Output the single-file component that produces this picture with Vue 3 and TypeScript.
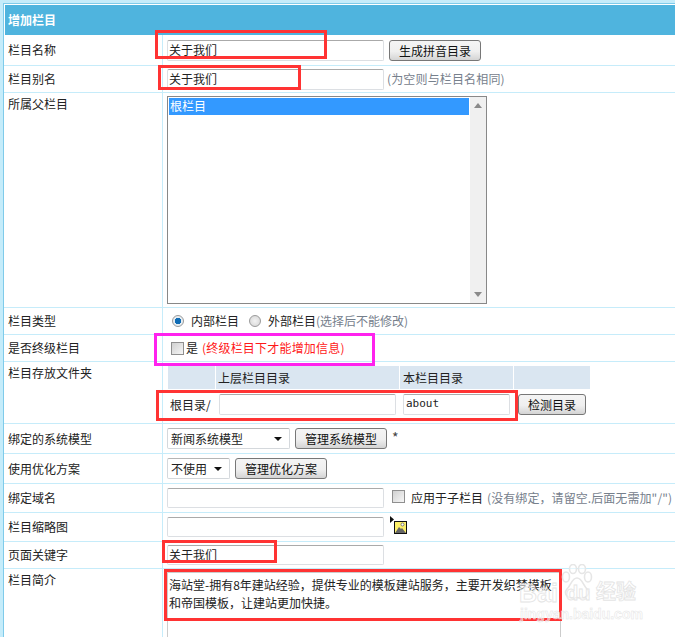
<script setup lang="ts">
const mainName = '关于我们'
</script>

<template>
  <div class="page">
    <div class="head">增加栏目</div>

    <div class="row" style="height:31px">
      <div class="lab">栏目名称</div>
      <div class="val">
        <span class="inp w217">{{ mainName }}</span>
        <span class="btn w92">生成拼音目录</span>
      </div>
    </div>
    <div class="row" style="height:27px">
      <div class="lab">栏目别名</div>
      <div class="val">
        <span class="inp w217">{{ mainName }}</span>
        <span class="gray note">(为空则与栏目名相同)</span>
      </div>
    </div>
    <div class="row" style="height:215px">
      <div class="lab top">所属父栏目</div>
      <div class="val top-val">
        <div class="list">
          <div class="list-body"><div class="opt">根栏目</div></div>
          <div class="scroll">
            <svg class="arr" width="8" height="5" viewBox="0 0 8 5"><path d="M0 5 L4 0 L8 5Z" fill="#8a8a8a" /></svg>
            <svg class="arr" width="8" height="5" viewBox="0 0 8 5"><path d="M0 0 L4 5 L8 0Z" fill="#8a8a8a" /></svg>
          </div>
        </div>
      </div>
    </div>
    <div class="row" style="height:27px">
      <div class="lab">栏目类型</div>
      <div class="val radios">
        <span class="radio on"></span><span class="rtext">内部栏目</span>
        <span class="radio"></span><span class="rtext2">外部栏目<span class="gray">(选择后不能修改)</span></span>
      </div>
    </div>
    <div class="row" style="height:27px">
      <div class="lab">是否终级栏目</div>
      <div class="val checks">
        <span class="check"></span><span class="is">是</span><span class="red">(终级栏目下才能增加信息)</span>
      </div>
    </div>
    <div class="row" style="height:62px">
      <div class="lab top">栏目存放文件夹</div>
      <div class="dirs">
        <div class="dir-head">
          <div class="c1"></div>
          <div class="c2">上层栏目目录</div>
          <div class="c3">本栏目目录</div>
          <div class="c4"></div>
        </div>
        <div class="dir-body">
          <span class="root">根目录/</span>
          <span class="inp w177"></span>
          <span class="inp w107 latin">about</span>
          <span class="btn w68">检测目录</span>
        </div>
      </div>
    </div>
    <div class="row" style="height:30px">
      <div class="lab">绑定的系统模型</div>
      <div class="val">
        <span class="sel w123">新闻系统模型<i class="caret"></i></span>
        <span class="btn w92 ml5">管理系统模型</span>
        <span class="star">*</span>
      </div>
    </div>
    <div class="row" style="height:30px">
      <div class="lab">使用优化方案</div>
      <div class="val">
        <span class="sel w63">不使用<i class="caret"></i></span>
        <span class="btn w92 ml5">管理优化方案</span>
      </div>
    </div>
    <div class="row" style="height:29px">
      <div class="lab">绑定域名</div>
      <div class="val">
        <span class="inp w217 h20"></span>
        <span class="check small"></span>
        <span class="apply">应用于子栏目</span>
        <span class="gray tip">(没有绑定，请留空.后面无需加"/")</span>
      </div>
    </div>
    <div class="row" style="height:29px">
      <div class="lab">栏目缩略图</div>
      <div class="val">
        <span class="inp w217 h20"></span>
        <svg class="pic" width="17" height="18" viewBox="0 0 17 18">
          <path d="M0 0 L4 3.500 L0 7Z" fill="#111" />
          <rect x="4.500" y="5.500" width="12" height="12" fill="#fdf06a" stroke="#111" />
          <circle cx="12.500" cy="8.500" r="1.500" fill="#fff" stroke="#555" stroke-width=".7" />
          <path d="M5 17 L9 11 L11 13 L12 12 L16 17Z" fill="#666" />
        </svg>
      </div>
    </div>
    <div class="row" style="height:27px">
      <div class="lab">页面关键字</div>
      <div class="val">
        <span class="inp w217 h20">{{ mainName }}</span>
      </div>
    </div>
    <div class="row last">
      <div class="lab top">栏目简介</div>
      <div class="val top-val2">
        <div class="area">海站堂-拥有8年建站经验，提供专业的模板建站服务，主要开发织梦模板<br />和帝国模板，让建站更加快捷。</div>
      </div>
    </div>

    <i class="mark red-mark m1"></i>
    <i class="mark red-mark m2"></i>
    <i class="mark pink-mark m3"></i>
    <i class="mark red-mark m4"></i>
    <i class="mark red-mark m5"></i>
    <i class="mark red-mark m6"></i>

    <div class="wm">
      <svg class="paw" width="32" height="38" viewBox="0 0 32 38">
        <g fill="rgba(255,255,255,.5)" stroke="#e6e6e6" stroke-width="1.600">
          <ellipse cx="5" cy="13" rx="3.500" ry="5" />
          <ellipse cx="12" cy="5" rx="3.500" ry="4.500" />
          <ellipse cx="21" cy="5" rx="3.500" ry="4.500" />
          <ellipse cx="27" cy="13" rx="3.500" ry="5" />
          <path d="M16 14 C11 14 10 21 6 25 C2 30 7 35 13 34 C15 33.500 17 33.500 19 34 C25 35 30 30 26 25 C22 21 21 14 16 14Z" />
        </g>
      </svg>
      <span class="bai">Bai</span><span class="du">du</span><span class="jy">经验</span>
      <span class="url">jingyan.baidu.com</span>
    </div>
  </div>
</template>

<style>
html, body { margin: 0; padding: 0; background: #fff; overflow: hidden; }
</style>

<style scoped>
.page {
  position: relative;
  width: 675px;
  height: 637px;
  overflow: hidden;
  box-sizing: border-box;
  background: #fff;
  border-left: 3px solid #c5ecfa;
  box-shadow: inset 1px 0 0 #7fcbea;
  padding-top: 5px;
  font: 12px/16px "Noto Sans CJK SC", "Liberation Sans", sans-serif;
  color: #222;
}
.page::before {
  content: "";
  position: absolute;
  left: 0; right: 0; top: 0;
  height: 3px;
  background: #c5ecfa;
  border-bottom: 1px solid #7fcbea;
}
.head {
  height: 30px;
  line-height: 30px;
  margin-left: 2px;
  padding-left: 3px;
  background: #4fb4de;
  color: #fff;
  font-weight: 700;
}
.row {
  display: flex;
  box-sizing: border-box;
  margin-left: 1px;
  border-bottom: 1px solid #c6ecfa;
}
.row.last { border-bottom: 0; height: 70px; }
.lab {
  box-sizing: border-box;
  width: 159px;
  padding-left: 4px;
  display: flex;
  align-items: center;
  border-right: 1px solid #c6ecfa;
  flex: none;
}
.lab.top { align-items: flex-start; padding-top: 3px; }
.val {
  display: flex;
  align-items: center;
  padding-left: 4px;
  flex: 1;
}
.top-val { align-items: flex-start; padding-top: 3px; }
.top-val2 { align-items: flex-start; padding-top: 3px; }
.inp {
  box-sizing: border-box;
  display: inline-block;
  height: 21px;
  line-height: 18px;
  padding-left: 1px;
  border: 1px solid #dcdfe3;
  border-top-color: #aaa;
  border-radius: 2px;
  background: #fff;
  flex: none;
}
.h20 { height: 20px; line-height: 17px; }
.w217 { width: 217px; }
.w177 { width: 177px; }
.w107 { width: 107px; }
.latin { font-family: "DejaVu Sans Mono", monospace; font-size: 11px; padding-left: 2px; }
.btn {
  box-sizing: border-box;
  display: inline-block;
  height: 21px;
  line-height: 19px;
  text-align: center;
  border: 1px solid #777;
  border-radius: 3px;
  background: linear-gradient(#f4f4f4, #efefef 55%, #d4d4d4);
  color: #111;
  flex: none;
}
.w92 { width: 92px; margin-left: 5px; }
.w68 { width: 68px; margin-left: 8px; }
.ml5 { margin-left: 5px; }
.note { margin-left: 3px; letter-spacing: .15px; }
.gray { color: #76808c; }
.list {
  box-sizing: border-box;
  display: flex;
  width: 320px;
  height: 208px;
  border: 1px solid #888;
  padding: 1px;
}
.list-body { flex: 1; }
.opt {
  height: 17px;
  line-height: 15px;
  padding-left: 1px;
  background: #3399ff;
  color: #fff;
}
.scroll {
  width: 16px;
  background: #f0f0f0;
  margin: -1px -1px -1px 1px;
  display: flex;
  flex-direction: column;
  align-items: center;
  justify-content: space-between;
  padding: 6px 0;
  box-sizing: border-box;
}
.arr { display: block; }
.radios { padding-left: 9px; }
.radio {
  box-sizing: border-box;
  width: 12px;
  height: 12px;
  border-radius: 50%;
  border: 1px solid #9a9a9a;
  background: radial-gradient(circle at 50% 50%, #f2f2f2, #d4d4d4);
  flex: none;
}
.radio.on { background: radial-gradient(circle, #0f6cb5 0 3px, #e6edf2 3.500px); }
.rtext { margin-left: 7px; width: 58px; }
.rtext2 { margin-left: 7px; }
.checks { padding-left: 8px; }
.check {
  box-sizing: border-box;
  width: 13px;
  height: 13px;
  border: 1px solid #8f8f8f;
  background: linear-gradient(135deg, #d0d0d0, #f6f6f6);
  flex: none;
}
.check.small { margin-left: 8px; margin-bottom: 4px; }
.is { margin-left: 2px; }
.red { margin-left: 4px; color: #ff1a1a; letter-spacing: .2px; }
.dirs { flex: 1; padding: 4px 0 0 5px; }
.dir-head { display: flex; height: 23px; line-height: 23px; width: 422px; gap: 1px; }
.dir-head > div { background: #dae6f1; box-sizing: border-box; }
.c1 { width: 47px; }
.c2 { width: 183px; padding-left: 2px; }
.c3 { width: 113px; padding-left: 3px; }
.c4 { width: 76px; }
.dir-body { display: flex; align-items: center; margin-top: 5px; }
.root { width: 51px; padding-left: 2px; box-sizing: border-box; }
.w107 { margin-left: 7px; }
.sel {
  box-sizing: border-box;
  position: relative;
  display: inline-block;
  height: 21px;
  line-height: 19px;
  padding-left: 3px;
  border: 1px solid #d4d8dc;
  border-top-color: #b5b5b5;
  border-radius: 2px;
  background: #fff;
  flex: none;
}
.w123 { width: 123px; }
.w63 { width: 63px; }
.caret {
  position: absolute;
  right: 7px;
  top: 8px;
  width: 0;
  height: 0;
  border: 4px solid transparent;
  border-top: 4px solid #111;
  border-bottom: 0;
}
.star { margin-left: 5px; margin-bottom: 3px; font-size: 14px; color: #444; }
.apply { margin-left: 6px; }
.tip { margin-left: 4px; letter-spacing: .08px; }
.pic { margin-left: 6px; margin-bottom: 5px; }
.area {
  box-sizing: border-box;
  width: 394px;
  height: 100px;
  padding: 3px 1px;
  line-height: 18px;
  border: 1px solid #ccc;
}
.mark { position: absolute; box-sizing: border-box; border-width: 3px; border-style: solid; pointer-events: none; }
.red-mark { border-color: #ff3333; }
.pink-mark { border-color: #ff22ee; }
.m1 { left: 152px; top: 30px; width: 172px; height: 29px; }
.m2 { left: 155px; top: 65px; width: 143px; height: 25px; }
.m3 { left: 151px; top: 333px; width: 221px; height: 33px; }
.m4 { left: 153px; top: 390px; width: 362px; height: 31px; }
.m5 { left: 159px; top: 540px; width: 115px; height: 23px; }
.m6 { left: 161px; top: 569px; width: 398px; height: 52px; }
.wm { position: absolute; left: 514px; top: 564px; width: 126px; height: 60px; pointer-events: none; }
.paw { position: absolute; left: 44px; top: 0; }
.bai, .du, .jy, .url { position: absolute; color: rgba(255,255,255,.5); -webkit-text-stroke: .8px #e4e4e4; white-space: nowrap; }
.bai { left: 2px; top: 16px; font: 700 25px/26px "Liberation Sans", sans-serif; }
.du { left: 49px; top: 18px; font: 700 20px/22px "Liberation Sans", sans-serif; }
.jy { left: 79px; top: 15px; font: 700 20px/24px "Noto Sans CJK SC", sans-serif; }
.url { left: 3px; top: 42px; font: 700 14px/16px "Liberation Sans", sans-serif; -webkit-text-stroke: .5px #e4e4e4; }
</style>
